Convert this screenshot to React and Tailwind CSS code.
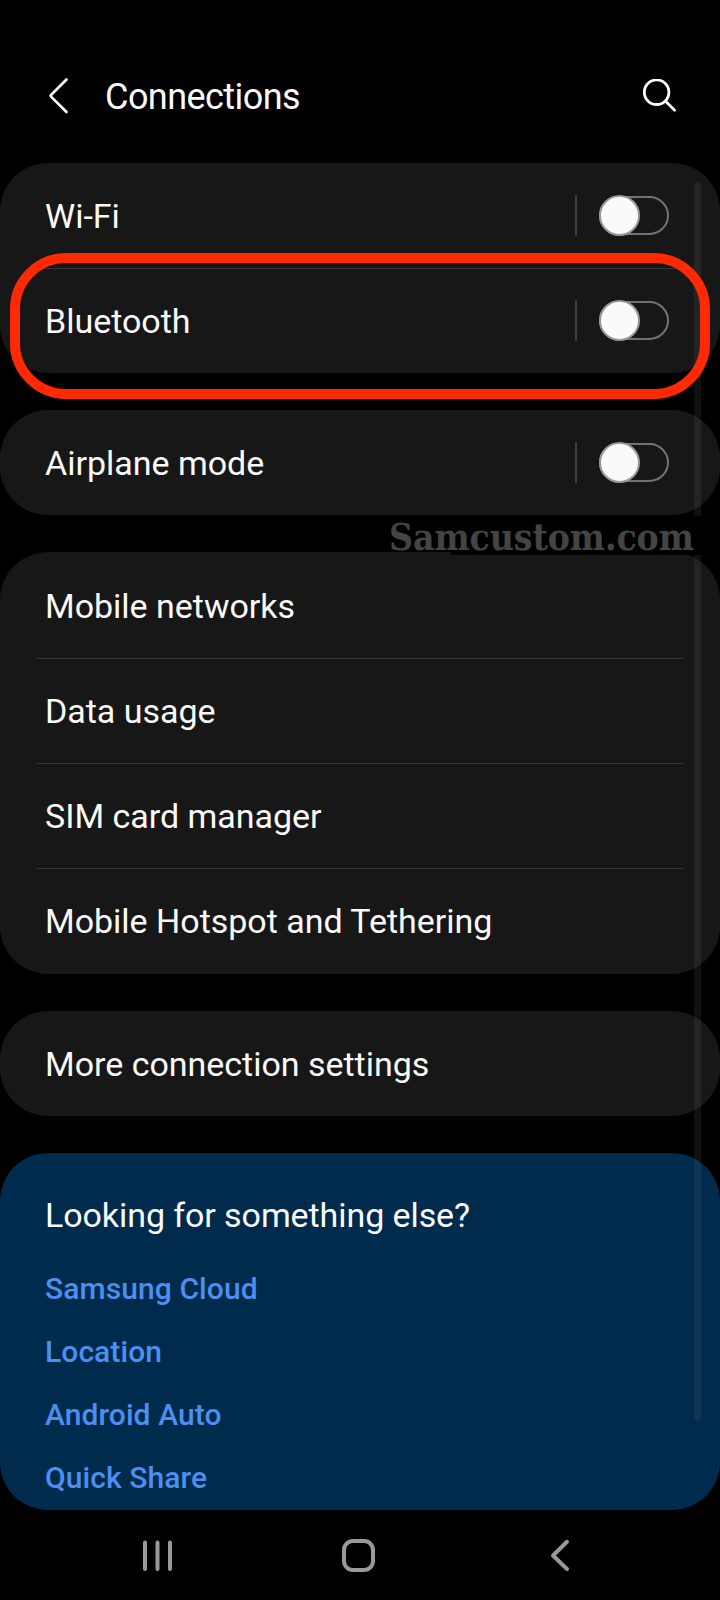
const dualRows = ["Wi-Fi", "Bluetooth"];
const networkRows = ["Mobile networks", "Data usage", "SIM card manager", "Mobile Hotspot and Tethering"];
const links = ["Samsung Cloud", "Location", "Android Auto", "Quick Share"];

function Toggle() {
  return (
    <div className="flex items-center">
      <span className="w-0.5 h-[41px] bg-[#3e3e3e] mr-[22px]" />
      <button className="relative w-[70px] h-[39px] rounded-full border-2 border-[#727272]">
        <span className="absolute -left-[2px] -top-[3px] w-[41px] h-[41px] rounded-full bg-[#fafafa] border-2 border-[#999]" />
      </button>
    </div>
  );
}

function Row({ label, toggle, divider }) {
  return (
    <div className="relative flex items-center justify-between h-[105px] pl-[45px] pr-[51px]">
      {divider && <span className="absolute left-[37px] right-[37px] top-0 h-px bg-[#353535]" />}
      <span className="text-[34px] leading-10 whitespace-nowrap tracking-[-0.02px]">{label}</span>
      {toggle && <Toggle />}
    </div>
  );
}

export default function App() {
  return (
    <div className="relative flex flex-col w-[720px] h-[1600px] overflow-hidden bg-black text-[#fafafa] font-[Roboto,sans-serif]">
      <header className="flex items-center h-[163px] pt-[30px] pl-12 pr-[42px]">
        <svg className="w-6 h-10" viewBox="0 0 24 40" fill="none" stroke="currentColor" strokeWidth="2.7" strokeLinecap="round" strokeLinejoin="round">
          <path d="M18.5 2.5 L3 18 Q2.2 18.8 3 19.6 L18.5 35" />
        </svg>
        <h1 className="ml-[33px] text-[36px] leading-10 tracking-[-0.55px]">Connections</h1>
        <svg className="w-9 h-9 ml-auto" viewBox="0 0 36 36" fill="none" stroke="currentColor" strokeWidth="2.8" strokeLinecap="round">
          <circle cx="14.6" cy="13.2" r="12.3" />
          <path d="M23.6 22.2 L32.6 31.2" />
        </svg>
      </header>

      <main className="flex flex-col gap-[37px]">
        <section className="flex flex-col h-[210px] rounded-[48px] bg-[#171717]">
          {dualRows.map((r, i) => (
            <Row key={r} label={r} toggle divider={i > 0} />
          ))}
        </section>

        <section className="h-[105px] rounded-[48px] bg-[#171717]">
          <Row label="Airplane mode" toggle />
        </section>

        <section className="h-[422px] pt-px rounded-[48px] bg-[#171717]">
          {networkRows.map((r, i) => (
            <Row key={r} label={r} divider={i > 0} />
          ))}
        </section>

        <section className="h-[105px] rounded-[48px] bg-[#171717]">
          <Row label="More connection settings" />
        </section>

        <section className="h-[357px] rounded-[48px] bg-[#002b4d] pl-[45px] pt-[42px]">
          <h2 className="text-[34px] leading-10 tracking-[-0.08px]">Looking for something else?</h2>
          <ul className="mt-[22px]">
            {links.map(l => (
              <li key={l} className="h-[63px] flex items-center text-[30px] font-medium leading-10 tracking-[0.08px] text-[#4c8fef]">{l}</li>
            ))}
          </ul>
        </section>
      </main>

      {/* scrollbar */}
      <div className="absolute left-[694px] top-[182px] w-[7px] h-[1239px] rounded-sm bg-[#808080]/12" />

      {/* watermark */}
      <div className="absolute left-[451px] right-0 top-[516px] h-[39px] bg-black" />
      <div className="absolute left-[389px] top-[514px] text-[37px] leading-[46px] font-bold whitespace-nowrap tracking-[-0.1px] text-[#444] font-['DejaVu_Serif_Condensed','DejaVu_Serif',serif]">
        Samcustom.com
      </div>

      {/* highlight */}
      <div className="absolute left-2.5 top-[253px] w-[700px] h-[146px] rounded-[56px] border-10 border-[#ff2a04]" />

      <nav className="flex items-center h-[90px] pl-[142px] text-[#999]">
        <svg className="w-8 h-9" viewBox="0 0 32 36" stroke="currentColor" strokeWidth="4" strokeLinecap="round">
          <path d="M3 5.5 V32 M15.5 5.5 V32 M28 5.5 V32" />
        </svg>
        <svg className="w-9 h-9 ml-[166px]" viewBox="0 0 36 36" fill="none" stroke="currentColor" strokeWidth="4">
          <rect x="4" y="4" width="29" height="29" rx="9" />
        </svg>
        <svg className="w-6 h-9 ml-[172px]" viewBox="0 0 24 36" fill="none" stroke="currentColor" strokeWidth="4" strokeLinecap="round" strokeLinejoin="round">
          <path d="M19 4.8 L5 18.5 L19 32" />
        </svg>
      </nav>
    </div>
  );
}
